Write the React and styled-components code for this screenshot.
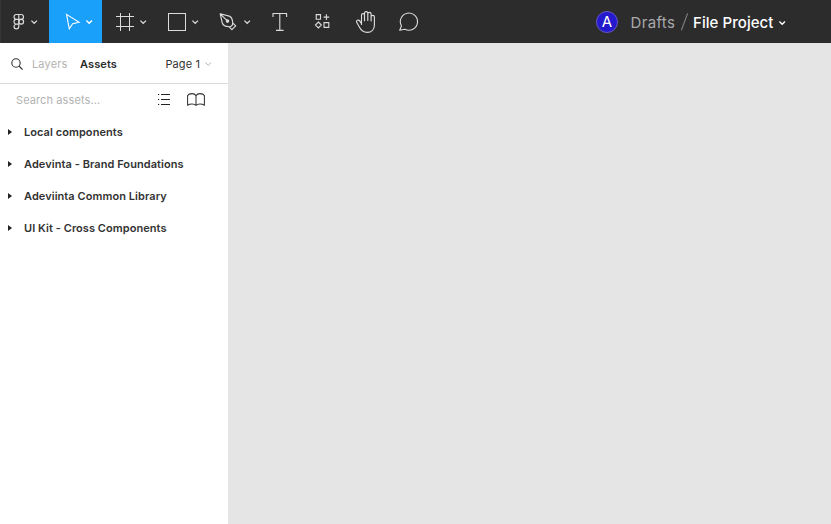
import React from "react";
import styled, { createGlobalStyle } from "styled-components";

const GlobalStyle = createGlobalStyle`
  * { box-sizing: border-box; }
  body { margin: 0; font-family: Inter, "Liberation Sans", sans-serif; }
  svg { display: block; flex: none; fill: none; overflow: visible; }
`;

const Window = styled.div`
  display: flex;
  flex-direction: column;
  width: 100%;
  height: 100vh;
  background: #e5e5e5;
  overflow: hidden;
`;

const Toolbar = styled.header`
  display: flex;
  flex: none;
  height: 43px;
  background: #2c2c2c;
  color: #dcdcdc;
`;

const Tool = styled.button`
  display: flex;
  align-items: flex-start;
  width: ${(p) => p.$width}px;
  height: 43px;
  padding: 0 0 0 ${(p) => p.$inset}px;
  gap: ${(p) => p.$gap || 0}px;
  border: 0;
  background: ${(p) => (p.$active ? "#18a0fb" : "transparent")};
  color: ${(p) => (p.$active ? "#fff" : "inherit")};
`;

const MenuTool = styled(Tool)`
  border-left: 1px solid #363636;
`;

const FileTitle = styled.div`
  display: flex;
  align-items: center;
  height: 43px;
  margin-left: auto;
  padding-right: 45px;
  font-size: 15px;
  line-height: 20px;
`;

const Avatar = styled.span`
  display: flex;
  align-items: center;
  justify-content: center;
  width: 22px;
  height: 22px;
  margin-right: 12.5px;
  border: 1px solid #6558c8;
  border-radius: 50%;
  background: #2419cc;
  color: #fff;
  font-size: 15px;
  font-weight: 400;
`;

const Folder = styled.span`
  width: 50px;
  color: #a9a9ac;
  letter-spacing: 0.35px;
  padding-top: 2px;
`;

const FileName = styled.span`
  width: 86px;
  margin-left: 5.5px;
  padding-top: 2px;
  color: #fff;
  font-weight: 500;
  letter-spacing: 0.06px;
  white-space: nowrap;
`;

const Sidebar = styled.aside`
  width: 228px;
  flex: 1;
  background: #fff;
  color: #333;
  font-size: 11px;
  line-height: 16px;
`;

const Tabs = styled.div`
  display: flex;
  align-items: center;
  height: 41px;
  padding: 1px 16.5px 0 10.5px;
  border-bottom: 1px solid #dcdcdc;
`;

const Tab = styled.span`
  width: 48px;
  margin-left: ${(p) => p.$offset || 0}px;
  color: ${(p) => (p.$active ? "#2c2c2c" : "#b3b3b3")};
  font-weight: ${(p) => (p.$active ? 600 : 400)};
  letter-spacing: ${(p) => (p.$active ? 0.1 : 0.15)}px;
`;

const PageSelect = styled.span`
  display: flex;
  align-items: center;
  gap: 4.5px;
  margin-left: auto;
  letter-spacing: 0.1px;

  svg { margin-top: 2px; }
`;

const Search = styled.div`
  display: flex;
  align-items: center;
  height: 32px;
  padding: 0 23px 0 16px;
`;

const Placeholder = styled.span`
  flex: 1;
  color: #b3b3b3;
  letter-spacing: 0.1px;
`;

const SearchActions = styled.div`
  display: flex;
  align-items: center;
  gap: 17px;
  padding-bottom: 2px;
`;

const Libraries = styled.ul`
  margin: 0;
  padding: 0;
  list-style: none;
`;

const Library = styled.li`
  display: flex;
  align-items: center;
  gap: 12px;
  height: 32px;
  padding-left: 8px;
  font-weight: 600;
  letter-spacing: 0.06px;
`;

const Chevron = ({ top = 0, width = 1.2, color = "currentColor" }) => (
  <svg width="7" height={top + 5} viewBox={`0 ${-top} 7 ${top + 5}`} stroke={color} strokeWidth={width}>
    <path d="M.4.6 3.2 3.3 6 .6" />
  </svg>
);

const FigmaMark = () => (
  <svg width="12" height="43" viewBox="0 0 12 43" stroke="currentColor" strokeWidth="1.15">
    <path d="M5.8 14.5H3.4a2.4 2.4 0 0 0 0 4.8h2.4zM5.8 14.5h2.3a2.4 2.4 0 0 1 0 4.8H5.8zM5.8 19.3H3.4a2.4 2.4 0 0 0 0 4.8h2.4zM5.8 24.1H3.4a2.4 2.4 0 1 0 2.4 2.4z" />
    <circle cx="8.2" cy="21.7" r="2.4" />
  </svg>
);

const MoveIcon = () => (
  <svg width="15" height="43" viewBox="0 0 15 43" stroke="currentColor" strokeWidth="1.1" strokeLinejoin="miter">
    <path d="m1.5 14.4 12.6 7.9-6.4 1.5-3.4 5z" />
  </svg>
);

const FrameIcon = () => (
  <svg width="18" height="43" viewBox="0 0 18 43" stroke="currentColor">
    <path d="M4.5 13v18M13.5 13v18M0 16.5h18M0 26.5h18" />
  </svg>
);

const RectangleIcon = () => (
  <svg width="18" height="43" viewBox="0 0 18 43" stroke="currentColor">
    <rect x=".5" y="13.5" width="17" height="17" />
  </svg>
);

const PenIcon = () => (
  <svg width="18" height="43" viewBox="0 0 18 43" stroke="currentColor" strokeWidth="1.15" strokeLinejoin="round">
    <path d="m1.2 13.8 9 2.3c1.8.5 3.3 3.4 3.5 6.7l3 3.1-3.8 3.7-2.8-2.8c-3.5-.2-6.1-1.6-6.8-3.8zM1.2 13.8l6.9 6.9M10.1 26.8c2-.1 3.7-1.5 3.6-4" />
    <circle cx="8.5" cy="21.1" r="1.2" fill="currentColor" />
  </svg>
);

const TextIcon = () => (
  <svg width="15" height="43" viewBox="0 0 15 43" stroke="currentColor" strokeWidth="1.1">
    <path d="M1 17v-3.5h13.6V17M7.8 13.5v17M4 30.4h7.6" />
  </svg>
);

const ResourcesIcon = () => (
  <svg width="15" height="43" viewBox="0 0 15 43" stroke="currentColor" strokeWidth="1.1">
    <path d="M1.2 14.6h4.3v4.6H1.2zM9 22.6h4.8v4.8H9zM11.4 14.3v5.6M8.6 17.1h5.6M3.4 22l3 3-3 3-3-3z" />
  </svg>
);

const HandIcon = () => (
  <svg width="20" height="43" viewBox="0 0 20 43" stroke="currentColor" strokeWidth="1.15" strokeLinecap="round" strokeLinejoin="round">
    <path d="M5.5 24.5v-9.2c0-2.2 3-2.2 3 0v5.4M8.5 20.5v-7.2c0-2.2 3.3-2.2 3.3 0v7.2M11.8 20.5V14c0-2.2 3.3-2.2 3.3 0v7M15.1 21v-4.1c0-2 3.3-2 3.3 0v8c0 4.5-2.8 7.5-7.3 7.5-4 0-6.2-2.3-7.6-5.1L.8 22.5c-1.2-2.2 1.8-3.2 3-1.4l1.7 2.5" />
  </svg>
);

const CommentIcon = () => (
  <svg width="20" height="43" viewBox="0 0 20 43" stroke="currentColor" strokeWidth="1.1" strokeLinejoin="round">
    <path d="M.7 30.3 2.5 26a8.6 8.6 0 1 1 3.5 3.3z" />
  </svg>
);

const Slash = () => (
  <svg width="7" height="17" viewBox="0 0 7 17" stroke="#7c7c7c" strokeWidth="1.2">
    <path d="M.4 17.3 6.6.4" />
  </svg>
);

const SearchIcon = () => (
  <svg width="12" height="12" viewBox="0 0 12 12" stroke="#333" strokeWidth="1.1">
    <circle cx="5" cy="5" r="4.2" />
    <path d="m8 8 3.6 3.7" />
  </svg>
);

const ListIcon = () => (
  <svg width="12" height="11" viewBox="0 0 12 11" stroke="#222">
    <path d="M0 .5h1.2M3 .5h9M0 5.5h1.2M3 5.5h9M0 10.5h1.2M3 10.5h9" />
  </svg>
);

const BookIcon = () => (
  <svg width="18" height="13" viewBox="0 0 18 13" stroke="#333" strokeWidth="1.05" strokeLinejoin="round">
    <path d="M9 2.8C8.2 1.2 6.8.6 5 .6 3 .6 1.4 1.2.6 2.5v9.7C2 11.2 3.4 10.9 5 10.9c1.7 0 3.1.3 4 1.5.9-1.2 2.3-1.5 4-1.5 1.6 0 3 .3 4.4 1.3V2.5C16.6 1.2 15 .6 13 .6c-1.8 0-3.2.6-4 2.2zM9 2.8v9.6" />
  </svg>
);

const Caret = () => (
  <svg width="4" height="6" viewBox="0 0 4 6">
    <path d="M0 0 4 3 0 6z" fill="#222" />
  </svg>
);

const libraries = [
  "Local components",
  "Adevinta - Brand Foundations",
  "Adeviinta Common Library",
  "UI Kit - Cross Components",
];

export default function App() {
  return (
    <Window>
      <GlobalStyle />
      <Toolbar>
        <MenuTool $width={49} $inset={12} $gap={6}><FigmaMark /><Chevron top={20} /></MenuTool>
        <Tool $active $width={53} $inset={16} $gap={6}><MoveIcon /><Chevron top={20} width={1.4} /></Tool>
        <Tool $width={52} $inset={14} $gap={6}><FrameIcon /><Chevron top={20} /></Tool>
        <Tool $width={52} $inset={14} $gap={6}><RectangleIcon /><Chevron top={20} /></Tool>
        <Tool $width={52} $inset={13} $gap={7}><PenIcon /><Chevron top={20} /></Tool>
        <Tool $width={43} $inset={14}><TextIcon /></Tool>
        <Tool $width={43} $inset={14}><ResourcesIcon /></Tool>
        <Tool $width={43} $inset={12}><HandIcon /></Tool>
        <Tool $width={43} $inset={12}><CommentIcon /></Tool>
        <FileTitle>
          <Avatar>A</Avatar>
          <Folder>Drafts</Folder>
          <Slash />
          <FileName>File Project</FileName>
          <Chevron top={3} width={1.4} color="#fff" />
        </FileTitle>
      </Toolbar>
      <Sidebar>
        <Tabs>
          <SearchIcon />
          <Tab $offset={9.5}>Layers</Tab>
          <Tab $active>Assets</Tab>
          <PageSelect>Page 1 <Chevron width={1} color="#b3b3b3" /></PageSelect>
        </Tabs>
        <Search>
          <Placeholder>Search assets...</Placeholder>
          <SearchActions><ListIcon /><BookIcon /></SearchActions>
        </Search>
        <Libraries>
          {libraries.map((name) => (
            <Library key={name}><Caret />{name}</Library>
          ))}
        </Libraries>
      </Sidebar>
    </Window>
  );
}
